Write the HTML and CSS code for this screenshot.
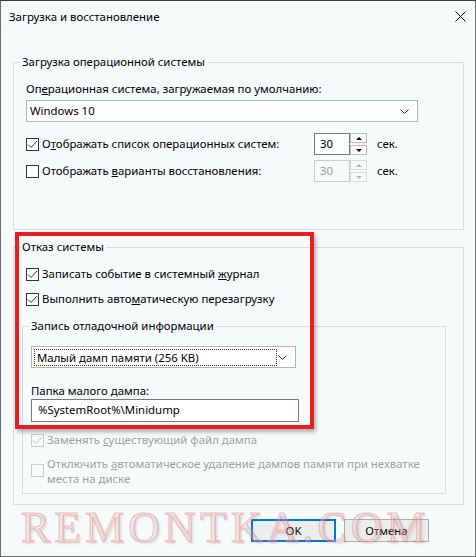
FILE: index.html
```html
<!DOCTYPE html>
<html lang="ru">
<head>
  <meta charset="UTF-8">
  <title>Загрузка и восстановление</title>
  <link rel="stylesheet" href="styles.css">
</head>
<body>
  <div class="window">
    <div class="titlebar">
      <span class="title">Загрузка и восстановление</span>
      <svg class="close" width="11" height="11" viewBox="0 0 11 11">
        <path d="M0.5 0.5 L10.5 10.5 M10.5 0.5 L0.5 10.5" stroke="#000" stroke-width="1" fill="none"/>
      </svg>
    </div>

    <div class="content">
      <div class="group group-boot">
        <div class="group-title">Загрузка операционной системы</div>
        <div class="field-label">Оп<u>е</u>рационная система, загружаемая по умолчанию:</div>
        <div class="select select-os">
          <span class="select-text">Windows 10</span>
          <svg class="chevron" width="9" height="5" viewBox="0 0 9 5"><path d="M0.5 0.5 L4.5 4.5 L8.5 0.5" stroke="#333" fill="none"/></svg>
        </div>

        <div class="spin-row">
          <label class="check check-wide">
            <span class="box"><svg width="11" height="11" viewBox="0 0 11 11"><path d="M1 5.5 L4 8.5 L10 2" stroke="#333" fill="none"/></svg></span>
            <span>О<u>т</u>ображать список операционных систем:</span>
          </label>
          <div class="spin">
            <div class="spin-field">30</div>
            <div class="spin-btns">
              <span class="spin-btn"><i class="arrow-up"></i></span>
              <span class="spin-btn"><i class="arrow-down"></i></span>
            </div>
          </div>
          <span class="unit">сек.</span>
        </div>

        <div class="spin-row row-gap">
          <label class="check check-wide">
            <span class="box"></span>
            <span>Отображать <u>в</u>арианты восстановления:</span>
          </label>
          <div class="spin disabled">
            <div class="spin-field">30</div>
            <div class="spin-btns">
              <span class="spin-btn"><i class="arrow-up"></i></span>
              <span class="spin-btn"><i class="arrow-down"></i></span>
            </div>
          </div>
          <span class="unit">сек.</span>
        </div>
      </div>

      <div class="group group-fail">
        <div class="group-title">Отказ системы</div>
        <label class="check check-first">
          <span class="box"><svg width="11" height="11" viewBox="0 0 11 11"><path d="M1 5.5 L4 8.5 L10 2" stroke="#333" fill="none"/></svg></span>
          <span>Записать событие в системный <u>ж</u>урнал</span>
        </label>
        <label class="check check-second">
          <span class="box"><svg width="11" height="11" viewBox="0 0 11 11"><path d="M1 5.5 L4 8.5 L10 2" stroke="#333" fill="none"/></svg></span>
          <span>Выполнить авто<u>м</u>атическую перезагрузку</span>
        </label>

        <div class="group group-inner">
          <div class="group-title">Запись отладочной информации</div>
          <div class="select select-dump">
            <span class="select-text focus">Малый дамп памяти (256 KB)</span>
            <svg class="chevron" width="9" height="5" viewBox="0 0 9 5"><path d="M0.5 0.5 L4.5 4.5 L8.5 0.5" stroke="#333" fill="none"/></svg>
          </div>
          <div class="field-label dump-label">Папка малого дампа:</div>
          <div class="text-input">%SystemRoot%\Minidump</div>

          <label class="check disabled check-replace">
            <span class="box"><svg width="11" height="11" viewBox="0 0 11 11"><path d="M1 5.5 L4 8.5 L10 2" stroke="#c4c4c4" fill="none"/></svg></span>
            <span>Заменять <u>с</u>уществующий файл дампа</span>
          </label>
          <label class="check disabled check-multi">
            <span class="box"></span>
            <span class="multi-text">Отключить <u>а</u>втоматическое удаление дампов памяти при нехватке<br>места на диске</span>
          </label>
        </div>
      </div>

      <div class="buttons">
        <button class="btn btn-default">OK</button>
        <button class="btn">Отмена</button>
      </div>
    </div>

    <div class="highlight"></div>
    <div class="watermark">REMONTKA.COM</div>
  </div>
</body>
</html>
```

FILE: styles.css
```css
* {
  box-sizing: border-box;
}

body {
  margin: 0;
  background: #2b2b2b;
  font-family: "Segoe UI", "Noto Sans", sans-serif;
  font-size: 11.4px;
  line-height: 16px;
  color: #000;
}

.window {
  position: relative;
  width: 476px;
  height: 557px;
  background: #f5fafb;
  border: 1px solid #6e6e6e;
  border-top-color: #3c3c3c;
  overflow: hidden;
}

.titlebar {
  height: 30px;
  display: flex;
  align-items: center;
  justify-content: space-between;
  padding: 0 9px 0 8px;
}

.title {
  margin-top: 1px;
}

.close {
  margin-top: 1px;
}

.content {
  padding: 31px 11px 0 12px;
}

/* group boxes */
.group {
  border: 1px solid #dcdcdc;
  padding: 0 12px;
}

.group-title {
  width: fit-content;
  margin: -9px 0 0 -6px;
  padding: 0 2px;
  background: #f5fafb;
}

.group-boot {
  padding-bottom: 47px;
}

.group-fail {
  margin-top: 17px;
  padding-bottom: 10px;
}

.group-inner {
  margin: 19px 5px 0 -4px;
  padding: 0 8px 7px 8px;
}

.group-inner .group-title {
  margin-left: -2px;
}

.field-label {
  margin-top: 11px;
}

.dump-label {
  margin-top: 15px;
}

/* combo boxes */
.select {
  display: flex;
  align-items: center;
  justify-content: space-between;
  height: 22px;
  background: #fff;
  border: 1px solid #b4b4b4;
  padding: 0 8px 0 3px;
}

.select-os {
  width: 392px;
  margin-top: 3px;
}

.select-dump {
  width: 265px;
  margin-top: 12px;
  padding-left: 2px;
}

.select-text.focus {
  width: 243px;
  height: 17px;
  padding-left: 2px;
  line-height: 15px;
  border: 1px dotted #333;
}

.text-input {
  width: 268px;
  height: 23px;
  background: #fff;
  border: 1px solid #7a7a7a;
  padding: 2px 0 0 6px;
}

/* check boxes */
.check {
  display: flex;
  align-items: center;
  gap: 3px;
}

.box {
  width: 13px;
  height: 13px;
  flex: none;
  display: flex;
  align-items: center;
  justify-content: center;
  background: #fff;
  border: 1px solid #333;
}

.check.disabled {
  color: #a0a0a0;
}

.check.disabled .box {
  border-color: #cccccc;
  background: transparent;
}

.check-first {
  margin-top: 11px;
}

.check-second {
  margin-top: 9px;
}

.check-replace {
  margin-top: 10px;
}

.check-multi {
  margin-top: 8px;
  align-items: flex-start;
  line-height: 15px;
}

.check-multi .box {
  margin-top: 8px;
}

.multi-text {
  white-space: nowrap;
}

/* spin boxes */
.spin-row {
  display: flex;
  align-items: center;
  height: 22px;
  margin-top: 11px;
}

.spin-row.row-gap {
  margin-top: 5px;
}

.check-wide {
  width: 288px;
}

.spin {
  display: flex;
  height: 22px;
}

.spin-field {
  width: 36px;
  height: 22px;
  border: 1px solid #7a7a7a;
  background: #fff;
  padding: 2px 0 0 5px;
}

.spin-btns {
  display: flex;
  flex-direction: column;
  justify-content: space-between;
  width: 17px;
}

.spin-btn {
  height: 10px;
  display: flex;
  align-items: center;
  justify-content: center;
  border: 1px solid #bcbcbc;
  background: #fbfbfb;
}

.arrow-up,
.arrow-down {
  width: 0;
  height: 0;
  border-left: 3px solid transparent;
  border-right: 3px solid transparent;
}

.arrow-up {
  border-bottom: 3px solid #000;
}

.arrow-down {
  border-top: 3px solid #000;
}

.spin.disabled .spin-field {
  border-color: #cccccc;
  color: #a0a0a0;
  background: transparent;
}

.spin.disabled .spin-btn {
  border-color: #dadada;
  background: transparent;
}

.spin.disabled .arrow-up {
  border-bottom-color: #b4b4b4;
}

.spin.disabled .arrow-down {
  border-top-color: #b4b4b4;
}

.unit {
  margin-left: 10px;
}

/* dialog buttons */
.buttons {
  display: flex;
  justify-content: flex-end;
  gap: 8px;
  margin: 14px 35px 0 0;
}

.btn {
  width: 85px;
  height: 23px;
  font: inherit;
  color: #000;
  background: #eceeee;
  border: 1px solid #adadad;
  padding: 0;
}

.btn-default {
  border: 2px solid #0078d7;
}

/* overlays from the screenshot */
.highlight {
  position: absolute;
  left: 14px;
  top: 231px;
  width: 299px;
  height: 197px;
  border: 4px solid #ec1c24;
  box-shadow: 2px 3px 4px rgba(0, 0, 0, 0.3);
  pointer-events: none;
}

.watermark {
  position: absolute;
  left: 20px;
  top: 505px;
  font-family: "Liberation Serif", serif;
  font-size: 44px;
  line-height: 44px;
  letter-spacing: 4px;
  color: rgba(255, 200, 200, 0.25);
  -webkit-text-stroke: 1px rgba(238, 130, 130, 0.55);
  text-shadow: 2px 2px 2px rgba(0, 0, 0, 0.1);
  pointer-events: none;
}
```
